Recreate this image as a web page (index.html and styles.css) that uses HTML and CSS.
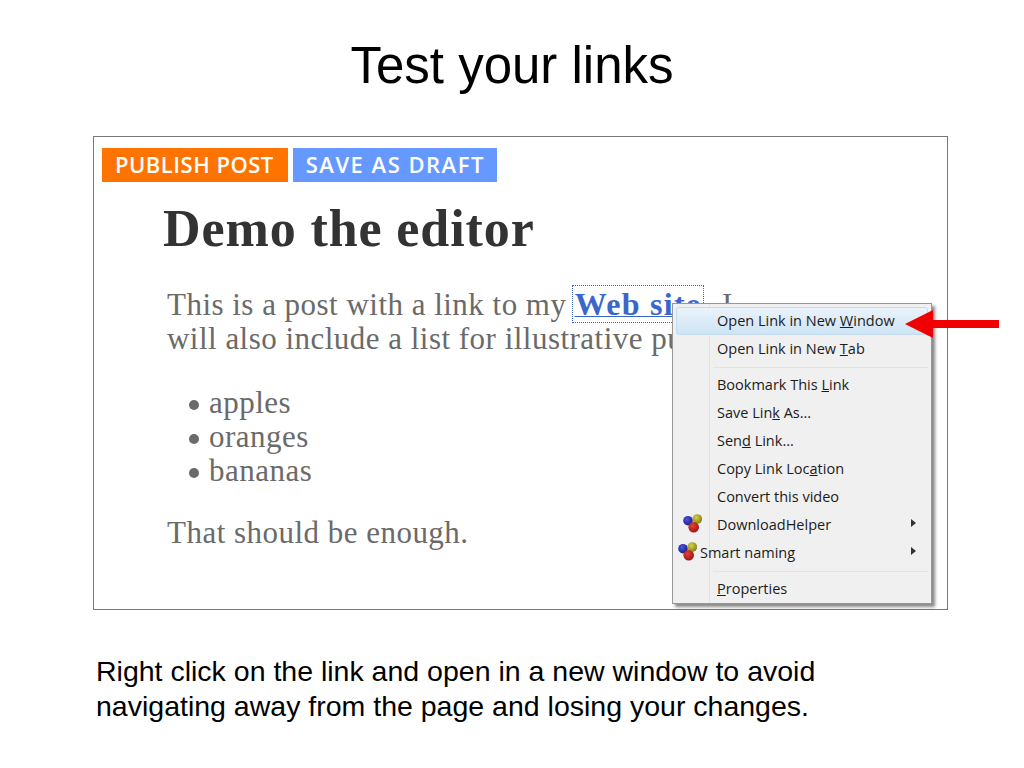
FILE: index.html
```html
<!DOCTYPE html>
<html lang="en">
<head>
  <meta charset="UTF-8">
  <title>Test your links</title>
  <link rel="stylesheet" href="styles.css">
</head>
<body>
  <h1 class="slideTitle">Test your links</h1>

  <div class="shot">
    <div class="actions">
      <span class="action publish">PUBLISH POST</span>
      <span class="action draft">SAVE AS DRAFT</span>
    </div>

    <div class="post">
      <h2>Demo the editor</h2>
      <p>This is a post with a link to my <a class="postLink" href="#">Web site</a>. I<br>will also include a list for illustrative purposes.</p>
      <ul>
        <li>apples</li>
        <li>oranges</li>
        <li>bananas</li>
      </ul>
      <p>That should be enough.</p>
    </div>

    <!-- Context menu sits on top of the post -->
    <div class="menu">
      <div class="item active">Open Link in New <u>W</u>indow</div>
      <div class="item">Open Link in New <u>T</u>ab</div>
      <div class="sep"></div>
      <div class="item">Bookmark This <u>L</u>ink</div>
      <div class="item">Save Lin<u>k</u> As...</div>
      <div class="item">Sen<u>d</u> Link...</div>
      <div class="item">Copy Link Loc<u>a</u>tion</div>
      <div class="item">Convert this video</div>
      <div class="item sub">
        <svg class="balls helper" viewBox="0 0 20 20">
          <defs>
            <radialGradient id="blueBall" cx="40%" cy="35%" r="70%"><stop offset="0" stop-color="#4a55e0"/><stop offset="1" stop-color="#1a1a80"/></radialGradient>
            <radialGradient id="yellowBall" cx="40%" cy="35%" r="70%"><stop offset="0" stop-color="#d8d040"/><stop offset="1" stop-color="#7c7c18"/></radialGradient>
            <radialGradient id="redBall" cx="40%" cy="35%" r="70%"><stop offset="0" stop-color="#e84030"/><stop offset="1" stop-color="#941414"/></radialGradient>
          </defs>
          <circle cx="5" cy="6.7" r="4.8" fill="url(#blueBall)"/><circle cx="14.3" cy="5" r="4.8" fill="url(#yellowBall)"/><circle cx="10.7" cy="13.3" r="5.3" fill="url(#redBall)"/>
        </svg>
        DownloadHelper
      </div>
      <div class="item sub">
        <svg class="balls naming" viewBox="0 0 20 20"><circle cx="5" cy="6.7" r="4.8" fill="url(#blueBall)"/><circle cx="14.3" cy="5" r="4.8" fill="url(#yellowBall)"/><circle cx="10.7" cy="13.3" r="5.3" fill="url(#redBall)"/></svg>
        <span class="shifted">Smart naming</span>
      </div>
      <div class="sep"></div>
      <div class="item"><u>P</u>roperties</div>
    </div>

    <svg class="arrow" viewBox="0 0 94 28"><path d="M0 14 L28 0 V10 H94 V18 H28 V28 Z" fill="#f00000"/></svg>
  </div>

  <p class="note">Right click on the link and open in a new window to avoid<br>navigating away from the page and losing your changes.</p>
</body>
</html>
```

FILE: styles.css
```css
* {
  box-sizing: border-box;
}

body {
  margin: 0;
  background: white;
  color: black;
  font-family: "Liberation Sans", Arial, sans-serif;
}

.slideTitle {
  margin: 0;
  padding-top: 37px;
  height: 136px;
  line-height: 58px;
  font-size: 51px;
  font-weight: normal;
  text-align: center;
}

.shot {
  position: relative;
  width: 855px;
  height: 474px;
  margin-left: 93px;
  border: 1px solid #777;
}

.actions {
  display: flex;
  gap: 5px;
  padding: 11px 0 0 8px;
}

.action {
  height: 34px;
  line-height: 33px;
  color: white;
  font-family: "Open Sans", sans-serif;
  font-size: 22px;
  font-weight: 600;
}

.publish {
  padding: 0 14px 0 13px;
  background: #ff7300;
  letter-spacing: 0.5px;
}

.draft {
  padding: 0 12px 0 13px;
  background: #6699ff;
  letter-spacing: 1.5px;
}

.post {
  padding: 0 0 0 69px;
  font-family: "Liberation Serif", serif;
  color: #6a6a6a;
  font-size: 31px;
  letter-spacing: 0.48px;
  line-height: 34px;
}

.post h2 {
  margin: 23px 0 0 0;
  color: #333;
  font-size: 52px;
  letter-spacing: 0.9px;
  line-height: 48px;
}

.post p {
  margin: 0;
  padding-left: 4px;
}

.post h2 + p {
  margin-top: 34px;
}

.post ul {
  margin: 30px 0 28px 0;
  padding: 0 0 0 26px;
  list-style: none;
}

.post li::before {
  content: "";
  display: inline-block;
  width: 10px;
  height: 10px;
  margin-right: 10px;
  border-radius: 50%;
  background: #6a6a6a;
  vertical-align: 3px;
}

.postLink {
  margin-left: -2px;
  margin-right: 2px;
  padding: 0 2px;
  color: #3a66cc;
  font-size: 32px;
  font-weight: bold;
  letter-spacing: 1.3px;
  text-decoration: underline;
  text-decoration-thickness: 1px;
  outline: 1px dotted #3a5fcd;
}

.menu {
  position: absolute;
  top: 166px;
  left: 578px;
  width: 260px;
  height: 301px;
  padding: 3px;
  background: linear-gradient(to right, #f0f0f0 36px, #e2e3e3 36px, #e2e3e3 37px, #f0f0f0 37px);
  border: 1px solid #979797;
  box-shadow: 3px 3px 3px #888;
  color: #1c1c1c;
  font-family: "Open Sans", sans-serif;
  font-size: 14.5px;
}

.item {
  position: relative;
  height: 28px;
  line-height: 27px;
  padding-left: 41px;
}

.item.active {
  background: linear-gradient(to bottom, #eaf3fb, #cfe4f5);
  border: 1px solid #c3dcf0;
  border-radius: 3px;
  padding-left: 40px;
  line-height: 25px;
}

.sub::after {
  content: "";
  position: absolute;
  right: 12px;
  top: 8px;
  border-left: 5px solid #333;
  border-top: 4px solid transparent;
  border-bottom: 4px solid transparent;
}

.sep {
  height: 8px;
  margin-left: 37px;
  background: linear-gradient(#e2e3e3, #e2e3e3) center / 100% 1px no-repeat;
}

.balls {
  position: absolute;
  width: 20px;
  height: 20px;
  top: 3px;
}

.helper {
  left: 7px;
}

.naming {
  left: 2px;
}

.shifted {
  margin-left: -17px;
}

.arrow {
  position: absolute;
  top: 173px;
  left: 811px;
  width: 94px;
  height: 28px;
}

.note {
  margin: 44px 0 0 96px;
  font-size: 28.5px;
  line-height: 34.5px;
}
```
